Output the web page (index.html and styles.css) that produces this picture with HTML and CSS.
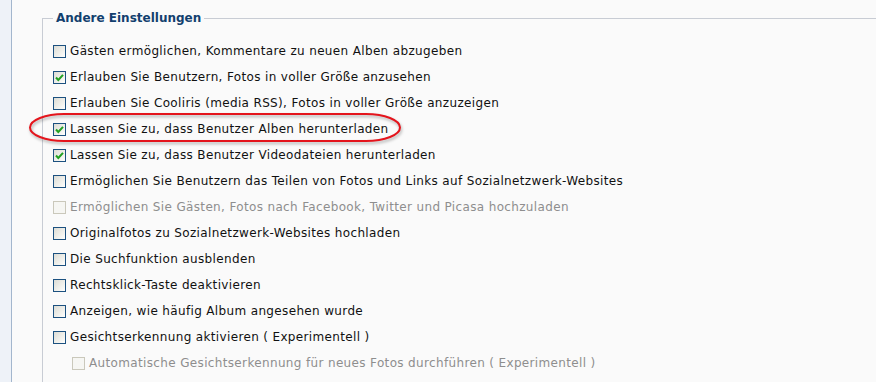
FILE: index.html
```html
<!DOCTYPE html>
<html lang="de">
<head>
    <meta charset="UTF-8">
    <title>Andere Einstellungen</title>
    <link rel="stylesheet" href="styles.css">
</head>
<body>
    <div class="page">
        <div class="sidebar"></div>
        <div class="content">
            <fieldset class="settings">
                <legend>Andere Einstellungen</legend>

                <label class="row"><span class="box"></span>Gästen ermöglichen, Kommentare zu neuen Alben abzugeben</label>
                <label class="row"><span class="box checked"><svg viewBox="0 0 11 11"><path d="M2 5.5 L4.3 8 L9 2.8"/></svg></span>Erlauben Sie Benutzern, Fotos in voller Größe anzusehen</label>
                <label class="row"><span class="box"></span>Erlauben Sie Cooliris (media RSS), Fotos in voller Größe anzuzeigen</label>
                <label class="row"><span class="box checked"><svg viewBox="0 0 11 11"><path d="M2 5.5 L4.3 8 L9 2.8"/></svg></span>Lassen Sie zu, dass Benutzer Alben herunterladen</label>
                <label class="row"><span class="box checked"><svg viewBox="0 0 11 11"><path d="M2 5.5 L4.3 8 L9 2.8"/></svg></span>Lassen Sie zu, dass Benutzer Videodateien herunterladen</label>
                <label class="row"><span class="box"></span>Ermöglichen Sie Benutzern das Teilen von Fotos und Links auf Sozialnetzwerk-Websites</label>
                <label class="row disabled"><span class="box"></span>Ermöglichen Sie Gästen, Fotos nach Facebook, Twitter und Picasa hochzuladen</label>
                <label class="row"><span class="box"></span>Originalfotos zu Sozialnetzwerk-Websites hochladen</label>
                <label class="row"><span class="box"></span>Die Suchfunktion ausblenden</label>
                <label class="row"><span class="box"></span>Rechtsklick-Taste deaktivieren</label>
                <label class="row"><span class="box"></span>Anzeigen, wie häufig Album angesehen wurde</label>
                <label class="row"><span class="box"></span>Gesichtserkennung aktivieren ( Experimentell )</label>
                <label class="row sub disabled"><span class="box"></span>Automatische Gesichtserkennung für neues Fotos durchführen ( Experimentell )</label>

                <!-- red marker drawn over the screenshot -->
                <svg class="marker" width="400" height="40" viewBox="0 0 400 40">
                    <rect x="1" y="4" width="370" height="27" rx="34" ry="13.5"/>
                </svg>
            </fieldset>
        </div>
    </div>
</body>
</html>
```

FILE: styles.css
```css
html, body {
    height: 100%;
}

body {
    margin: 0;
    background-color: #fafafa;
    font-family: 'DejaVu Sans', Verdana, sans-serif;
    font-size: 12px;
    color: #111;
    overflow: hidden;
}

.page {
    display: flex;
    height: 100%;
}

.sidebar {
    width: 11px;
    flex-shrink: 0;
    background-color: #eef2f8;
    border-right: 1px solid #a3b6cd;
}

.content {
    flex: 1;
    padding: 11px 0 0 30px;
    overflow: hidden;
}

.settings {
    position: relative;
    margin: 0;
    padding: 13px 0 40px 10px;
    border: 1px solid #c8ccd4;
    border-right: none;
    border-bottom: none;
    min-width: 0;
}

.settings legend {
    margin-left: 0;
    padding: 0 3px;
    font-weight: bold;
    font-size: 12px;
    color: #123f6e;
}

.row {
    display: flex;
    align-items: center;
    gap: 4px;
    height: 26px;
    letter-spacing: 0.35px;
    white-space: nowrap;
}

.row.sub {
    padding-left: 19px;
}

.row.disabled {
    color: #8e8e8e;
}

.box {
    width: 11px;
    height: 11px;
    flex-shrink: 0;
    border: 1px solid #1c5180;
    background: linear-gradient(135deg, #dcdcd5 0%, #f4f4f0 70%, #ffffff 100%);
    display: flex;
}

.row.disabled .box {
    border-color: #cac8bb;
    background: #f6f6f3;
}

.box svg {
    width: 11px;
    height: 11px;
    fill: none;
    stroke: #21a121;
    stroke-width: 2;
}

.marker {
    position: absolute;
    left: -14px;
    top: 85px;
    overflow: visible;
    fill: none;
    stroke: #e4141c;
    stroke-width: 2;
    filter: drop-shadow(1px 2px 1.5px rgba(0, 0, 0, 0.3));
}
```
